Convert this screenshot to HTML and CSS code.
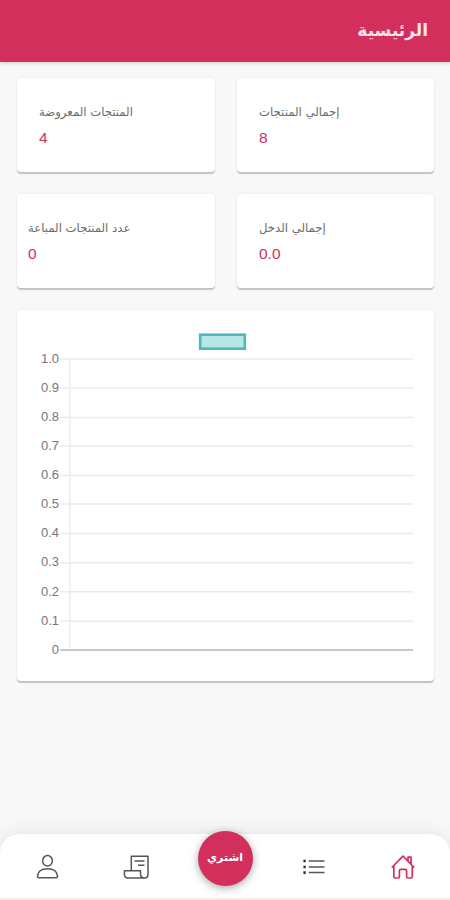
FILE: index.html
```html
<!DOCTYPE html>
<html lang="ar" dir="rtl">
<head>
    <meta charset="UTF-8">
    <meta name="viewport" content="width=device-width, initial-scale=1.0">
    <title>الرئيسية</title>
    <link rel="stylesheet" href="styles.css">
</head>
<body>
    <header class="top-bar">
        <h1>الرئيسية</h1>
    </header>

    <main class="content">
        <div class="stats">
            <div class="card stat">
                <p class="stat-label">إجمالي المنتجات</p>
                <p class="stat-value">8</p>
            </div>
            <div class="card stat">
                <p class="stat-label">المنتجات المعروضة</p>
                <p class="stat-value">4</p>
            </div>
            <div class="card stat">
                <p class="stat-label">إجمالي الدخل</p>
                <p class="stat-value">0.0</p>
            </div>
            <div class="card stat stat-wide">
                <p class="stat-label">عدد المنتجات المباعة</p>
                <p class="stat-value">0</p>
            </div>
        </div>

        <div class="card chart">
            <svg width="417" height="371" viewBox="0 0 417 371" direction="ltr">
                <!-- legend -->
                <rect class="legend" x="183.2" y="24.7" width="44.6" height="14"/>
                <!-- grid -->
                <path class="grid" d="M43 49H396M43 78H396M43 107.5H396M43 136H396M43 165.5H396M43 194H396M43 223.5H396M43 252.7H396M43 281.8H396M43 311.3H396M53 49V340"/>
                <path class="zero-line" d="M43 340H396"/>
                <g class="ticks">
                    <text x="42" y="53">1.0</text>
                    <text x="42" y="82">0.9</text>
                    <text x="42" y="111">0.8</text>
                    <text x="42" y="140">0.7</text>
                    <text x="42" y="169">0.6</text>
                    <text x="42" y="198">0.5</text>
                    <text x="42" y="227">0.4</text>
                    <text x="42" y="256">0.3</text>
                    <text x="42" y="286">0.2</text>
                    <text x="42" y="315">0.1</text>
                    <text x="42" y="344">0</text>
                </g>
            </svg>
        </div>
    </main>

    <nav class="bottom-nav">
        <a class="nav-item active">
            <svg width="26" height="26" viewBox="0 0 26 26">
                <path d="M1.8 13.5 13 2.2 24.2 13.5M18 7V3.2H21V10.2M3.8 12V22.6Q3.8 24 5.2 24H8.2Q9.4 24 9.4 22.6V17Q9.4 15.4 11 15.4H15Q16.6 15.4 16.6 17V22.6Q16.6 24 17.8 24H21Q22.3 24 22.3 22.6V12"/>
            </svg>
        </a>
        <a class="nav-item">
            <svg width="26" height="26" viewBox="0 0 26 26">
                <path d="M7.7 7H23.5M7.7 13H23.5M7.7 18.6H23.5"/>
                <path class="dots" d="M2.4 7H4.8M2.4 13H4.8M2.4 18.6H4.8"/>
            </svg>
        </a>
        <a class="nav-item buy">
            <span class="buy-btn">اشتري</span>
        </a>
        <a class="nav-item">
            <svg width="26" height="26" viewBox="0 0 26 26">
                <path d="M8.3 16.5V2.2H25V20.5Q25 24 21.5 24H5Q1.4 24 1.4 20V16.8H17.5V19.5Q17.5 24 21.5 24"/>
                <path d="M11.5 7H21.5M15 11.3H21.5"/>
            </svg>
        </a>
        <a class="nav-item">
            <svg width="26" height="26" viewBox="0 0 26 26">
                <ellipse cx="13.5" cy="6.8" rx="4.9" ry="5.2"/>
                <path d="M5 23.8Q3.3 23.8 3.5 21.8C4.1 17 8.5 14.7 13.5 14.7S22.9 17 23.5 21.8Q23.7 23.8 22 23.8Z"/>
            </svg>
        </a>
    </nav>
</body>
</html>
```

FILE: styles.css
```css
* {
    box-sizing: border-box;
}

body {
    font-family: "Liberation Sans", "DejaVu Sans", sans-serif;
    margin: 0;
    height: 900px;
    display: flex;
    flex-direction: column;
    background-color: #f8f8f8;
    overflow: hidden;
}

.top-bar {
    height: 62px;
    padding: 0 22px 2px;
    display: flex;
    align-items: center;
    background-color: #d32f5d;
    box-shadow: 0 1px 4px rgba(0, 0, 0, 0.2);
}

h1 {
    margin: 0;
    color: #fbe3ea;
    font-family: "DejaVu Sans", sans-serif;
    font-size: 17px;
    font-weight: bold;
}

.content {
    flex: 1;
    padding: 16px 16px 0 17px;
}

.stats {
    display: grid;
    grid-template-columns: 197px 198px;
    gap: 22px;
    margin-bottom: 22px;
}

.card {
    background-color: #fff;
    border-radius: 4px;
    box-shadow: 0 2px 1px rgba(0, 0, 0, 0.2), 0 0 3px rgba(0, 0, 0, 0.07);
}

.stat {
    height: 94px;
    padding: 23px 22px 0;
    text-align: left;
}

.stat-wide {
    padding-left: 11px;
}

.stat p {
    margin: 0;
}

.stat-label {
    height: 25px;
    line-height: 22px;
    font-family: "DejaVu Sans", sans-serif;
    font-size: 11.7px;
    color: #6c6c6c;
    white-space: nowrap;
}

.stat-value {
    line-height: 24px;
    font-size: 15.5px;
    color: #d32f5d;
}

.chart {
    height: 371px;
}

.chart svg {
    display: block;
}

.legend {
    fill: #b7e6e6;
    stroke: #4bb9b9;
    stroke-width: 2.6;
}

.grid {
    fill: none;
    stroke: #ebebeb;
    stroke-width: 1.5;
}

.zero-line {
    stroke: #c8c8c8;
    stroke-width: 1.8;
}

.ticks {
    font-family: "Liberation Sans", sans-serif;
    font-size: 13px;
    fill: #777;
    text-anchor: end;
}

.bottom-nav {
    height: 66px;
    padding: 2px 3px 0;
    display: flex;
    background-color: #fff;
    border-bottom: 2px solid #f8e9e9;
    border-radius: 20px 20px 0 0;
    box-shadow: 0 -2px 18px rgba(0, 0, 0, 0.08);
}

.nav-item {
    flex: 1;
    display: flex;
    justify-content: center;
    align-items: center;
}

.nav-item svg {
    fill: none;
    stroke: #555;
    stroke-width: 1.5;
    stroke-linejoin: round;
}

.nav-item.active svg {
    stroke: #d32f5d;
    stroke-width: 1.7;
}

.nav-item .dots {
    stroke: #333;
    stroke-width: 2.6;
}

.buy-btn {
    width: 55px;
    height: 55px;
    margin-top: -18px;
    flex-shrink: 0;
    border-radius: 50%;
    background-color: #d32f5d;
    box-shadow: 0 2px 9px rgba(0, 0, 0, 0.35);
    color: #fff;
    font-family: "DejaVu Sans", sans-serif;
    font-size: 11px;
    font-weight: bold;
    line-height: 53px;
    text-align: center;
}
```
